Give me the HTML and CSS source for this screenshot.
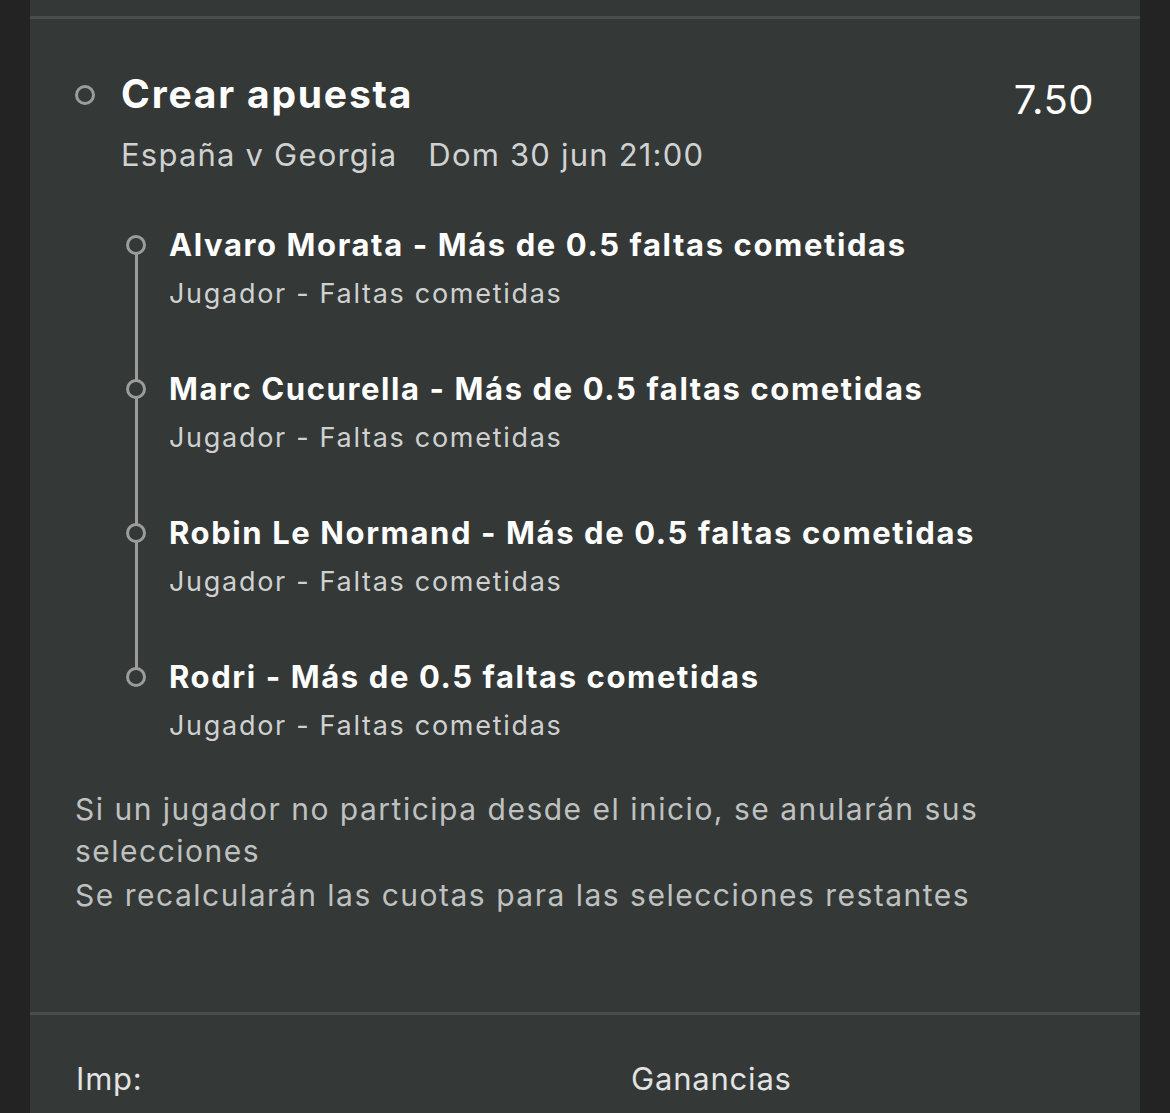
FILE: index.html
```html
<!DOCTYPE html>
<html>
  <head>
    <title>Crear apuesta</title>
    <link rel="stylesheet" href="styles.css">
  </head>
  <body>
    <div class="panel">
      <div class="rule"></div>
      <div class="bet">
        <div class="bet-head">
          <span class="dot dot-head"></span>
          <div class="bet-title">
            <h2>Crear apuesta</h2>
            <div class="match">
              <span>España v Georgia</span>
              <span>Dom 30 jun 21:00</span>
            </div>
          </div>
          <div class="odds">7.50</div>
        </div>

        <ul class="legs">
          <li>
            <span class="dot"></span>
            <div class="leg-title">Alvaro Morata - Más de 0.5 faltas cometidas</div>
            <div class="leg-sub">Jugador - Faltas cometidas</div>
          </li>
          <li>
            <span class="dot"></span>
            <div class="leg-title">Marc Cucurella - Más de 0.5 faltas cometidas</div>
            <div class="leg-sub">Jugador - Faltas cometidas</div>
          </li>
          <li>
            <span class="dot"></span>
            <div class="leg-title">Robin Le Normand - Más de 0.5 faltas cometidas</div>
            <div class="leg-sub">Jugador - Faltas cometidas</div>
          </li>
          <li>
            <span class="dot"></span>
            <div class="leg-title">Rodri - Más de 0.5 faltas cometidas</div>
            <div class="leg-sub">Jugador - Faltas cometidas</div>
          </li>
        </ul>

        <div class="notes">
          <p>Si un jugador no participa desde el inicio, se anularán sus selecciones</p>
          <p>Se recalcularán las cuotas para las selecciones restantes</p>
        </div>
      </div>
      <div class="rule"></div>
      <div class="stake">
        <span class="stake-label">Imp:</span>
        <span class="stake-win">Ganancias</span>
      </div>
    </div>
  </body>
</html>
```

FILE: styles.css
```css
body {
  margin: 0;
  background-color: #232323;
  font-family: Inter, "Noto Sans", sans-serif;
  display: flex;
  justify-content: center;
  height: 1113px;
  overflow: hidden;
}

.panel {
  width: 1110px;
  background-color: #343837;
  padding-top: 16px;
}

.rule {
  height: 3px;
  background-color: #4a4f4e;
}

.bet {
  padding: 51px 46px 96px 45px;
}

.bet-head {
  display: flex;
  align-items: flex-start;
}

.dot {
  width: 14px;
  height: 14px;
  border: 3px solid #9b9d9c;
  border-radius: 50%;
  box-sizing: content-box;
  background-color: #343837;
}

.dot-head {
  margin-top: 15px;
  margin-right: 26px;
}

.bet-title {
  flex: 1;
}

.bet-title h2 {
  margin: 0;
  color: #ffffff;
  font-size: 39px;
  line-height: 48px;
  font-weight: 700;
  letter-spacing: 1.8px;
}

.match {
  margin-top: 17px;
  display: flex;
  gap: 31px;
  color: #d0d2d1;
  font-size: 31px;
  line-height: 40px;
  letter-spacing: 1.2px;
}

.odds {
  color: #ffffff;
  font-size: 40px;
  line-height: 48px;
  margin-top: 6px;
  letter-spacing: 0.5px;
}

.legs {
  list-style-type: none;
  margin: 48px 0 0 0;
  padding: 0 0 0 51px;
}

.legs li {
  position: relative;
  padding-left: 43px;
  height: 144px;
}

.legs li:last-child {
  height: auto;
}

.legs li .dot {
  position: absolute;
  left: 0;
  top: 12px;
  z-index: 1;
}

.legs li:not(:last-child)::before {
  content: "";
  position: absolute;
  left: 9px;
  top: 22px;
  width: 3px;
  height: 144px;
  background-color: #9b9d9c;
}

.leg-title {
  color: #ffffff;
  font-size: 31px;
  font-weight: 700;
  line-height: 44px;
  letter-spacing: 1.6px;
}

.leg-sub {
  margin-top: 8px;
  color: #cfd1d0;
  font-size: 27px;
  line-height: 38px;
  letter-spacing: 1.7px;
}

.notes {
  margin-top: 43px;
  color: #bfc1c0;
  font-size: 30px;
  line-height: 42px;
  letter-spacing: 1.5px;
}

.notes p {
  margin: 0;
}

.notes p + p {
  margin-top: 2px;
}

.stake {
  display: flex;
  padding: 44px 46px 0 46px;
  color: #e2e3e3;
  font-size: 31px;
  line-height: 40px;
  letter-spacing: 0.8px;
}

.stake-label {
  width: 555px;
}
```
